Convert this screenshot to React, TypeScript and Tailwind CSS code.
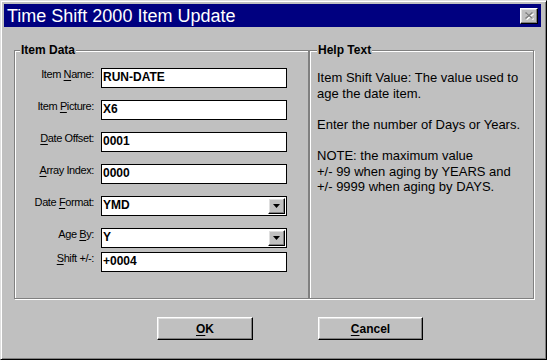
import React from 'react';

type Field = {
  pre: string;
  key: string;
  post: string;
  value: string;
  combo?: boolean;
  top: string;
};

const fields: Field[] = [
  { pre: 'Item ', key: 'N', post: 'ame:', value: 'RUN-DATE', top: 'mt-[17px]' },
  { pre: 'Item ', key: 'P', post: 'icture:', value: 'X6', top: 'mt-[12px]' },
  { pre: '', key: 'D', post: 'ate Offset:', value: '0001', top: 'mt-[12px]' },
  { pre: '', key: 'A', post: 'rray Index:', value: '0000', top: 'mt-[12px]' },
  { pre: 'Date ', key: 'F', post: 'ormat:', value: 'YMD', combo: true, top: 'mt-[12px]' },
  { pre: 'Age ', key: 'B', post: 'y:', value: 'Y', combo: true, top: 'mt-[12px]' },
  { pre: '', key: 'S', post: 'hift +/-:', value: '+0004', top: 'mt-[4px]' },
];

const helpLines = [
  'Item Shift Value: The value used to',
  'age the date item.',
  '',
  'Enter the number of Days or Years.',
  '',
  'NOTE: the maximum value',
  '+/- 99 when aging by YEARS and',
  '+/- 9999 when aging by DAYS.',
];

const raised =
  'bg-[#c0c0c0] border border-t-white border-l-white border-r-black border-b-black shadow-[inset_-1px_-1px_0_#808080,inset_1px_1px_0_#dfdfdf]';

const ArrowButton = () => (
  <div className={`absolute right-[1px] top-[1px] w-[17px] h-[16px] flex items-center justify-center ${raised}`}>
    <svg width="7" height="4" viewBox="0 0 7 4">
      <path d="M0 0h7L3.5 4z" fill="#000" />
    </svg>
  </div>
);

const Row = ({ f }: { f: Field }) => (
  <div className={`flex items-start ${f.top}`}>
    <div className="w-[80px] text-right text-[11px] tracking-[-0.4px] leading-[13px] pr-[1px]">
      {f.pre}
      <span className="underline underline-offset-[2px]">{f.key}</span>
      {f.post}
    </div>
    <div className="relative ml-[6px] w-[186px] h-[20px] bg-white border border-black pl-[1px] font-bold text-[12px] leading-[17px]">
      {f.value}
      {f.combo && <ArrowButton />}
    </div>
  </div>
);

const GroupBox = ({ label, labelLeft, width, children }: { label: string; labelLeft: string; width: string; children: React.ReactNode }) => (
  <div className={`relative h-[249px] ${width} border border-[#808080] shadow-[1px_1px_0_#fff,inset_1px_1px_0_#fff]`}>
    <div className={`absolute top-[-8px] ${labelLeft} bg-[#c0c0c0] px-[1px] font-bold text-[12px] leading-[14px]`}>{label}</div>
    {children}
  </div>
);

const Button = ({ k, rest, width }: { k: string; rest: string; width: string }) => (
  <div className={`${width} h-[23px] flex items-center justify-center font-bold text-[12px] ${raised}`}>
    <span>
      <span className="underline underline-offset-[2px]">{k}</span>
      {rest}
    </span>
  </div>
);

const App: React.FC = () => {
  return (
    <div
      className="w-[547px] h-[360px] bg-[#c0c0c0] border border-t-[#dfdfdf] border-l-[#dfdfdf] border-r-black border-b-black shadow-[inset_1px_1px_0_#fff,inset_-1px_-1px_0_#808080] p-[3px] text-black overflow-hidden"
      style={{ fontFamily: '"Liberation Sans", Arial, sans-serif' }}
    >
      <div className="h-[23px] mr-[2px] bg-[#000080] flex items-center justify-between pl-[3px] pr-[3px]">
        <span className="text-white text-[18px] leading-[22px]">Time Shift 2000 Item Update</span>
        <div className={`w-[18px] h-[16px] flex items-center justify-center ${raised}`}>
          <svg width="10" height="9" viewBox="0 0 10 9">
            <path d="M1.5 1.5l7 6M8.5 1.5l-7 6" stroke="#fff" strokeWidth="1.6" transform="translate(1 1)" />
            <path d="M1.5 1.5l7 6M8.5 1.5l-7 6" stroke="#808080" strokeWidth="1.6" />
          </svg>
        </div>
      </div>

      <div className="flex mt-[23px] ml-[10px]">
        <GroupBox label="Item Data" labelLeft="left-[5px]" width="w-[295px]">
          {fields.map((f) => (
            <Row key={f.key} f={f} />
          ))}
        </GroupBox>
        <GroupBox label="Help Text" labelLeft="left-[7px]" width="w-[225px]">
          <div className="mt-[19px] pl-[7px] text-[13px] leading-[15.6px]">
            {helpLines.map((l, i) => (
              <div key={i} className="h-[15.6px] whitespace-nowrap">{l}</div>
            ))}
          </div>
        </GroupBox>
      </div>

      <div className="flex gap-[65px] mt-[18px] ml-[153px]">
        <Button k="O" rest="K" width="w-[96px]" />
        <Button k="C" rest="ancel" width="w-[105px]" />
      </div>
    </div>
  );
};

export default App;
